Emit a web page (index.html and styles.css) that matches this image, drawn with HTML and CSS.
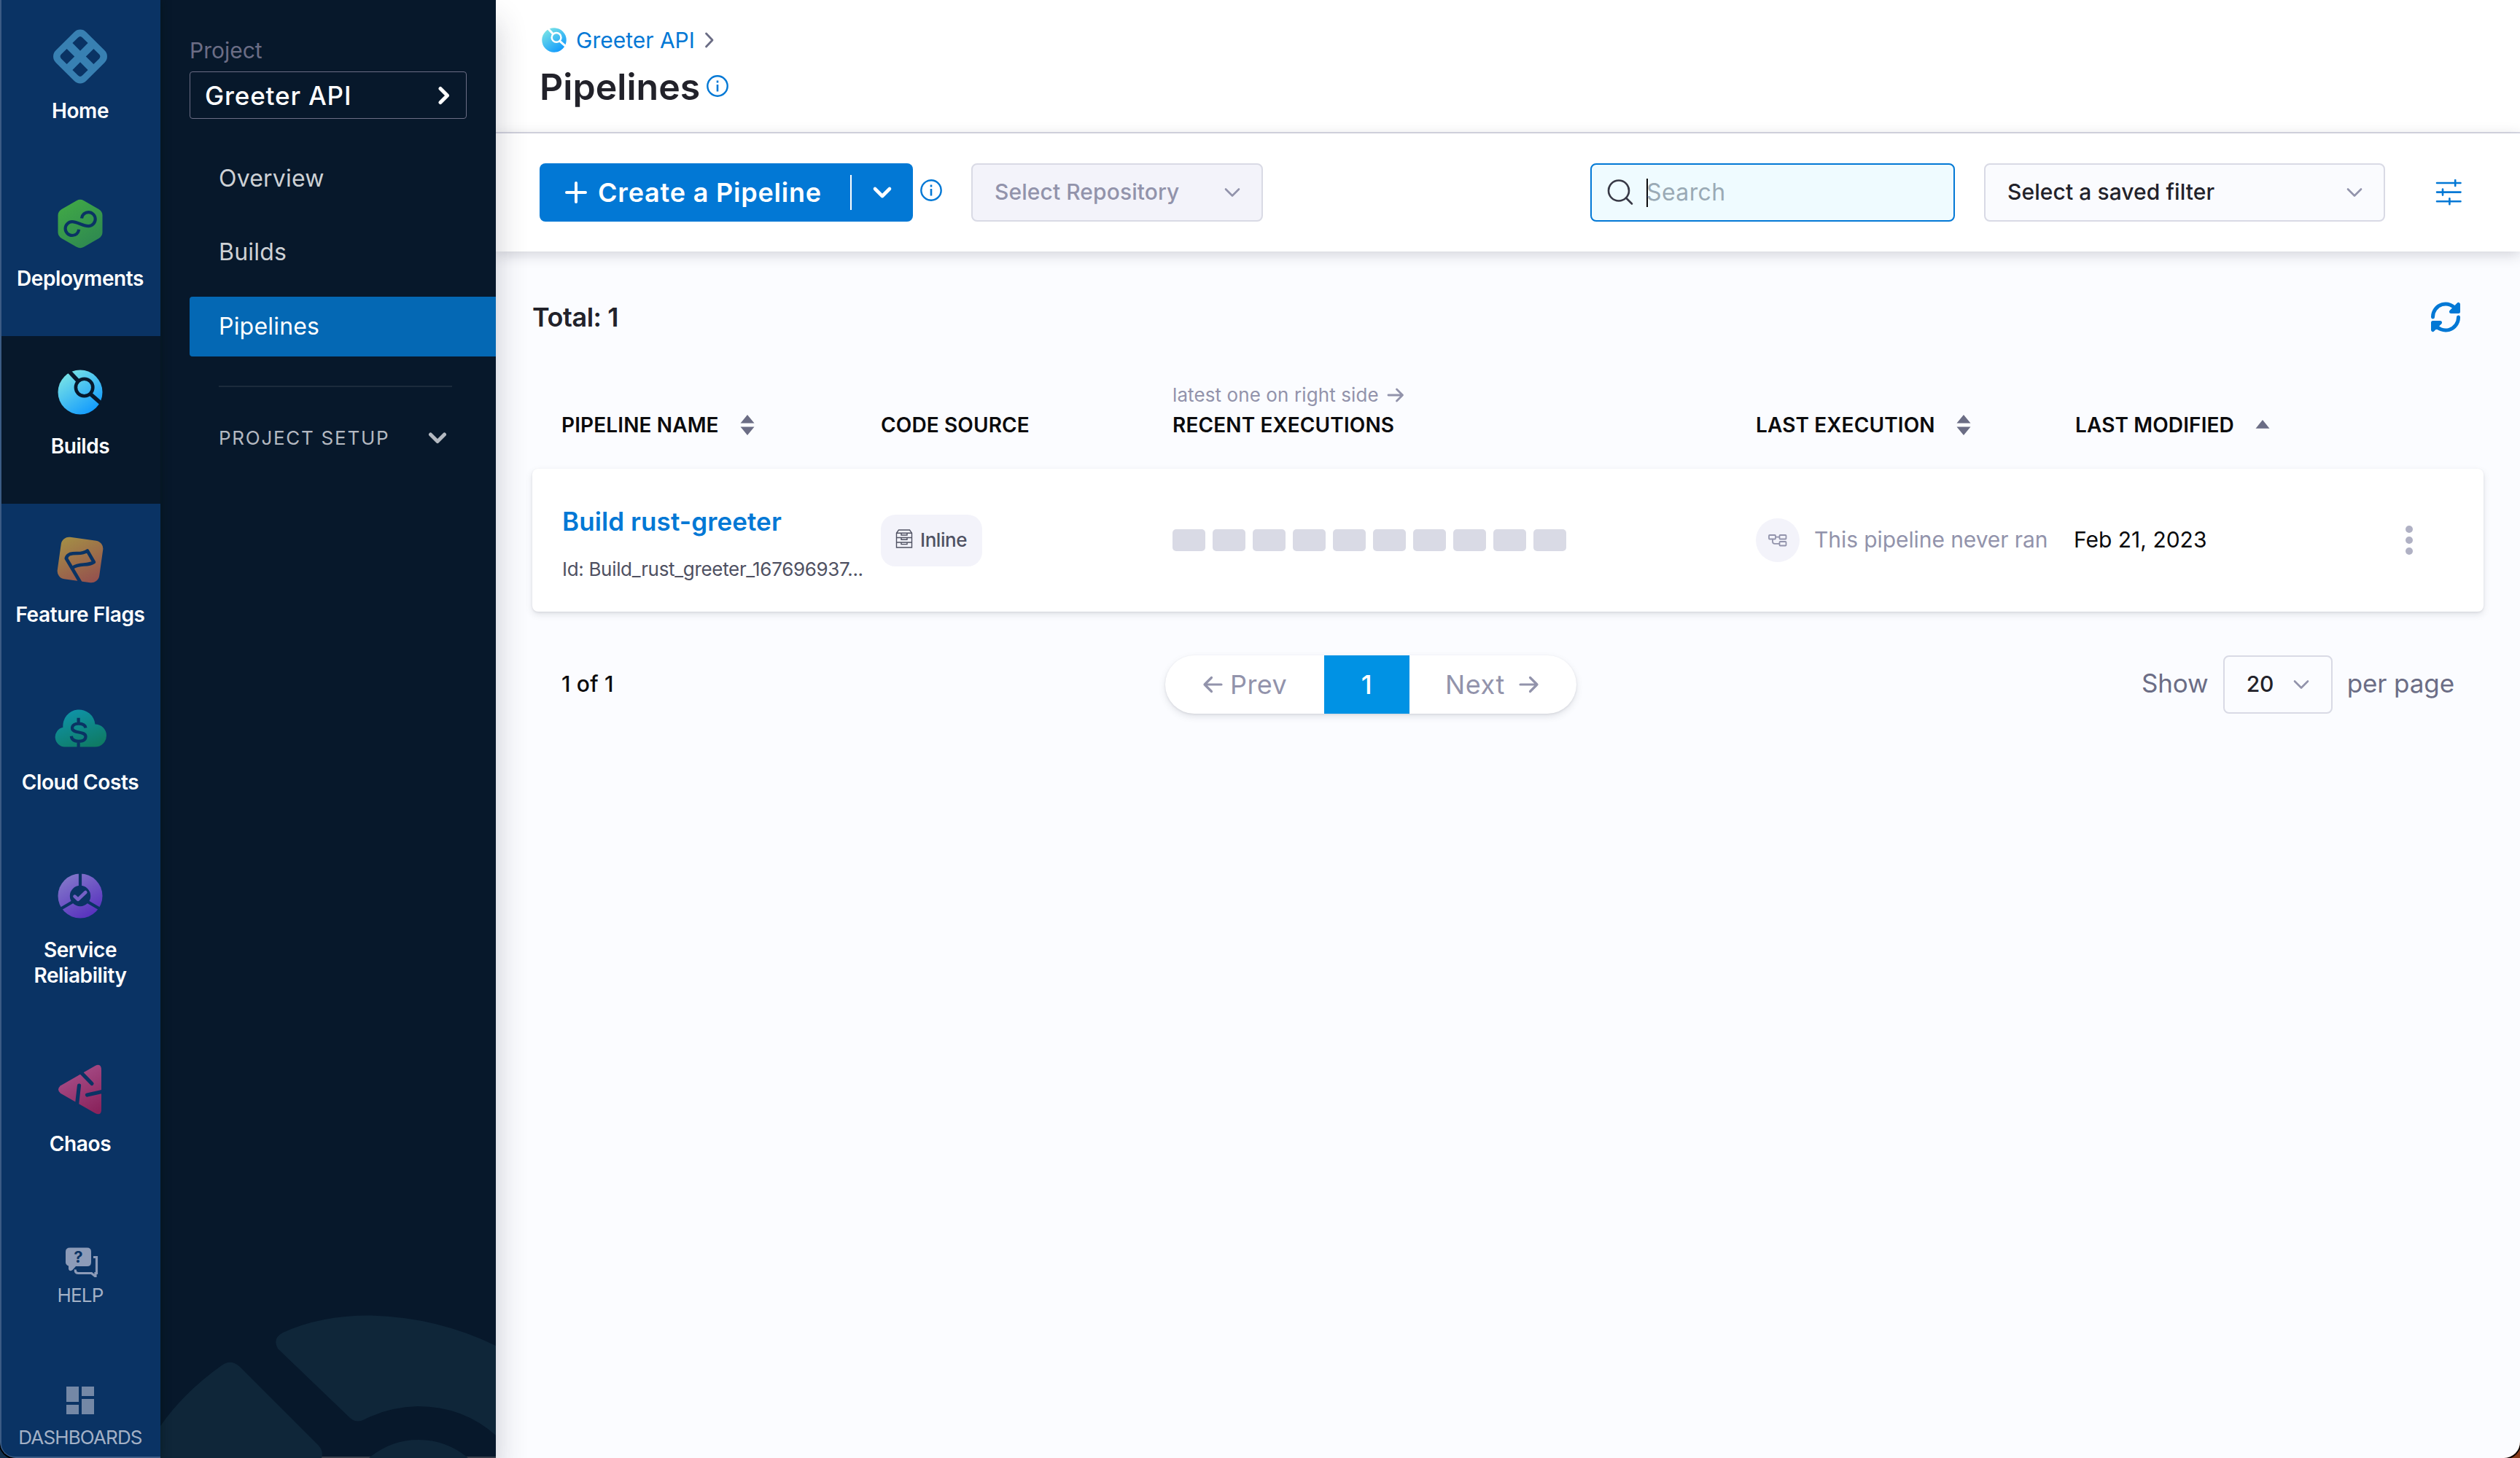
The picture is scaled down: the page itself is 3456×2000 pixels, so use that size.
FILE: index.html
```html
<!DOCTYPE html>
<html lang="en">
<head>
<meta charset="utf-8">
<title>Pipelines</title>
<link rel="stylesheet" href="styles.css">
</head>
<body>
<div class="app">
  <nav class="rail">
    <a class="module">
      <svg class="module-icon" viewBox="-40 -40 80 80"><path transform="translate(0 .5) rotate(45)" fill="#3880b2" fill-rule="evenodd" d="M-18-29.5H18A11.5 11.5 0 0 1 29.5-18V18A11.5 11.5 0 0 1 18 29.5H-18A11.5 11.5 0 0 1-29.5 18V-18A11.5 11.5 0 0 1-18-29.5ZM-5.5-20.5H-16Q-20.5-20.5-20.5-16V-5.5H-5.5ZM5.5-20.5V-5.5H20.5V-16Q20.5-20.5 16-20.5ZM-20.5 5.5V16Q-20.5 20.5-16 20.5H-5.5V5.5ZM5.5 5.5V20.5H16Q20.5 20.5 20.5 16V5.5Z"/></svg>
      <span class="module-label">Home</span>
    </a>
    <a class="module">
      <svg class="module-icon" viewBox="-40 -40 80 80"><defs><linearGradient id="g-cd" x1="0" y1="0" x2=".6" y2="1"><stop offset="0" stop-color="#42ab45"/><stop offset="1" stop-color="#2f8a50"/></linearGradient></defs><path fill="url(#g-cd)" d="M-5-31.8Q0-34.5 5-31.8L25.5-20Q30.5-17 30.5-11.5V11.5Q30.5 17 25.5 20L5 31.8Q0 34.5-5 31.8L-25.5 20Q-30.5 17-30.5 11.5V-11.5Q-30.5-17-25.5-20Z"/><path fill="none" stroke="#0a3364" stroke-width="4.2" d="M2-7.6C2.6-12.5 6.5-15.9 11.2-15.9A9.5 9.5 0 0 1 11.2 3.1C3.500 3.100-4-2.800-11-2.800A9.400 9.400 0 0 0-11 16C-6 16-2.500 12.700-1.800 7.800"/></svg>
      <span class="module-label">Deployments</span>
    </a>
    <a class="module module-active">
      <svg class="module-icon" viewBox="-40 -40 80 80"><defs><linearGradient id="g-ci" x1=".22" y1=".1" x2=".84" y2="1"><stop offset="0" stop-color="#73dfe7"/><stop offset="1" stop-color="#0a95ff"/></linearGradient></defs><circle r="30.500" fill="url(#g-ci)"/><circle cx="5.600" cy="-6.500" r="11.700" fill="none" stroke="#07182b" stroke-width="4.600"/><path fill="none" stroke="#07182b" stroke-width="5.500" d="M-17-30.500L-3-15.500M13.500 2L30 16.500"/></svg>
      <span class="module-label">Builds</span>
    </a>
    <a class="module">
      <svg class="module-icon" viewBox="-40 -40 80 80"><defs><linearGradient id="g-ff" x1=".2" y1="0" x2=".9" y2="1"><stop offset="0" stop-color="#a38b46"/><stop offset="1" stop-color="#95504e"/></linearGradient></defs><rect x="-29" y="-29" width="58" height="58" rx="11" transform="rotate(8)" fill="url(#g-ff)"/><path fill="none" stroke="#0a3364" stroke-width="4.600" stroke-linejoin="round" d="M1.500 33L-19.200-2Q-18.500-6-14-8C-6-10.500 2-6.500 9.800-12.500L18.800 3C10 9-1 4-10 10.500"/></svg>
      <span class="module-label">Feature Flags</span>
    </a>
    <a class="module">
      <svg class="module-icon" viewBox="-40 -40 80 80"><defs><linearGradient id="g-ccm" x1=".3" y1="0" x2=".8" y2="1"><stop offset="0" stop-color="#0f93a8"/><stop offset="1" stop-color="#0f7a62"/></linearGradient></defs><path fill="url(#g-ccm)" d="M-21.500 25.500A13.500 13.500 0 0 1-23.600-1.200A22 22 0 0 1 20.500-5.500A15.500 15.500 0 0 1 20.500 25.500Z"/><path fill="none" stroke="#0a3364" stroke-width="4.200" d="M7.400-.5C6.800-4.500 2.800-6.300-2.400-6.300C-7.200-6.300-11-4.200-11-.2C-11 8 7.500 3 7.500 11.500C7.500 16 3 17.800-2.400 17.800C-8 17.800-11.700 15.300-12.200 10.800M-2.400-14.200V-6.500M-2.400 18V26"/></svg>
      <span class="module-label">Cloud Costs</span>
    </a>
    <a class="module">
      <svg class="module-icon" viewBox="-40 -40 80 80"><defs><linearGradient id="g-srm" x1=".2" y1="0" x2=".8" y2="1"><stop offset="0" stop-color="#8479ca"/><stop offset="1" stop-color="#552dbd"/></linearGradient></defs><circle r="30.500" fill="url(#g-srm)"/><circle r="14.200" fill="#0a3364"/><path stroke="#0a3364" stroke-width="4.200" d="M0-10V-33M8.500 7L29 19M-8.500 7L-29 19"/><path fill="none" stroke="#7560c6" stroke-width="4.600" stroke-linecap="round" stroke-linejoin="round" d="M-7.500.6L-3 4.800L7.300-5"/></svg>
      <span class="module-label">Service<br>Reliability</span>
    </a>
    <a class="module">
      <svg class="module-icon" viewBox="-40 -40 80 80"><defs><linearGradient id="g-ch" x1=".3" y1="0" x2=".8" y2="1"><stop offset="0" stop-color="#a9518b"/><stop offset="1" stop-color="#8a235c"/></linearGradient></defs><path fill="url(#g-ch)" d="M-27-4.800L20.500-32Q29-36 29-26V28Q29 37 20.500 33L-27 5.800Q-33 .5-27-4.800Z"/><path fill="none" stroke="#0a3364" stroke-width="5.200" stroke-linecap="round" d="M0-24L16-7.500M-1.500-5L-4.600 22M9.500 8L32 3"/></svg>
      <span class="module-label">Chaos</span>
    </a>
    <a class="utility utility-help">
      <svg class="utility-icon" viewBox="0 0 48 42"><path fill="#8c9bb8" d="M6 1.500H29.500Q35 1.500 35 7V21.500Q35 27 29.500 27H14L9.500 32Q5.500 35 4 31V26.500Q0 25 0 21.500V7Q0 1.500 6 1.500Z"/><path fill="none" stroke="#8c9bb8" stroke-width="3.200" d="M38 14.500H42.500V36.500H41V41L35.500 36.500H17Q12.500 36 13.500 31.500"/><text x="17.500" y="21.500" text-anchor="middle" class="help-mark">?</text></svg>
      <span class="utility-label">HELP</span>
    </a>
    <a class="utility">
      <svg class="utility-icon" viewBox="0 0 48 42"><path fill="#7488a6" d="M5 2H22V23H5ZM26 2H43V15H26ZM5 27H22V40H5ZM26 19H43V40H26Z"/></svg>
      <span class="utility-label">DASHBOARDS</span>
    </a>
  </nav>

  <aside class="sidenav">
    <svg class="sidenav-art" viewBox="220 1800 460 200"><g fill="#0f2639"><path d="M388 1828Q440 1804 509 1804.500Q600 1807 680 1846V1969Q635 1929 573 1929Q533 1930 500 1947Q489 1953 480 1945L381 1850Q373 1836 388 1828Z"/><path d="M220 1956Q252 1910 304 1873Q316 1864 328 1874L437 1983Q444 1991 441 2000H220Z"/><path d="M506 2000Q536 1975 574 1975Q612 1975 642 2000Z"/></g></svg>
    <div class="scope-label">Project</div>
    <div class="scope-select">
      <span>Greeter API</span>
      <svg width="18" height="26" viewBox="0 0 18 26"><path fill="none" stroke="#fff" stroke-width="5" stroke-linecap="round" stroke-linejoin="round" d="M4 3.500L13.500 13L4 22.500"/></svg>
    </div>
    <ul class="menu">
      <li class="menu-item">Overview</li>
      <li class="menu-item">Builds</li>
      <li class="menu-item menu-active">Pipelines</li>
    </ul>
    <div class="menu-divider"></div>
    <div class="menu-group">
      <span>PROJECT SETUP</span>
      <svg width="26" height="18" viewBox="0 0 26 18"><path fill="none" stroke="#b4b9c1" stroke-width="5" stroke-linecap="round" stroke-linejoin="round" d="M3.500 4L13 13.500L22.500 4"/></svg>
    </div>
  </aside>

  <main class="page">
    <header class="page-header">
      <div class="crumbs">
        <svg width="34" height="34" viewBox="-31 -31 62 62"><circle r="30.500" fill="url(#g-ci)"/><circle cx="5.600" cy="-6.500" r="11.700" fill="none" stroke="#fff" stroke-width="4.600"/><path fill="none" stroke="#fff" stroke-width="5.500" d="M-17-30.500L-3-15.500M13.500 2L30 16.500"/></svg>
        <a class="crumb">Greeter API</a>
        <svg width="14" height="22" viewBox="0 0 14 22"><path fill="none" stroke="#6b6d85" stroke-width="2.800" stroke-linejoin="round" stroke-linecap="round" d="M2.500 2L11 11L2.500 20"/></svg>
      </div>
      <div class="title-row">
        <h1>Pipelines</h1>
        <svg width="30" height="30" viewBox="0 0 30 30"><circle cx="15" cy="15" r="13.700" fill="none" stroke="#0278d5" stroke-width="2.400"/><path stroke="#0278d5" stroke-width="2.600" d="M15 13V22.500M15 7.500V10.500"/></svg>
      </div>
    </header>

    <section class="toolbar">
      <div class="create">
        <button class="create-main">
          <svg width="30" height="30" viewBox="0 0 30 30"><path stroke="#fff" stroke-width="4" stroke-linecap="round" d="M15 2V28M2 15H28"/></svg>
          <span>Create a Pipeline</span>
        </button>
        <span class="create-split"></span>
        <button class="create-more"><svg width="28" height="20" viewBox="0 0 28 20"><path fill="none" stroke="#fff" stroke-width="4.600" stroke-linecap="round" stroke-linejoin="round" d="M4 5L14 15L24 5"/></svg></button>
      </div>
      <svg class="create-info" width="30" height="30" viewBox="0 0 30 30"><circle cx="15" cy="15" r="13.700" fill="none" stroke="#0278d5" stroke-width="2.400"/><path stroke="#0278d5" stroke-width="2.600" d="M15 13V22.500M15 7.500V10.500"/></svg>
      <div class="select select-repo"><span>Select Repository</span><svg width="22" height="14" viewBox="0 0 22 14"><path fill="none" stroke="#9293ab" stroke-width="2.600" stroke-linecap="round" stroke-linejoin="round" d="M2 2.500L11 11.500L20 2.500"/></svg></div>
      <div class="search">
        <svg width="36" height="36" viewBox="0 0 36 36"><circle cx="16" cy="15.500" r="14" fill="none" stroke="#383946" stroke-width="2.600"/><path stroke="#383946" stroke-width="2.600" stroke-linecap="round" d="M26 25.500L34 33.500"/></svg>
        <span class="caret"></span><span class="search-hint">Search</span>
      </div>
      <div class="select select-filter"><span>Select a saved filter</span><svg width="22" height="14" viewBox="0 0 22 14"><path fill="none" stroke="#9293ab" stroke-width="2.600" stroke-linecap="round" stroke-linejoin="round" d="M2 2.500L11 11.500L20 2.500"/></svg></div>
      <svg class="filters" width="36" height="36" viewBox="0 0 36 36"><path fill="none" stroke="#0278d5" stroke-width="2.600" stroke-linecap="round" d="M2 5H34.500M2 17.600H34.500M2 30.300H34.500M27.200 1V9M10 13.600V21.600M19.400 26.300V34.300"/></svg>
    </section>

    <section class="content">
      <div class="summary">
        <span class="total">Total: 1</span>
        <svg width="42" height="42" viewBox="-21 -21 42 42"><path id="half" fill="none" stroke="#0278d5" stroke-width="5" stroke-linecap="round" stroke-linejoin="round" d="M-17.500 0A17.500 17.500 0 0 1 15-9.500M17.500-17.500V-7.500H7.500Z"/><use href="#half" transform="rotate(180)"/></svg>
      </div>

      <div class="columns row-grid">
        <div class="column"><span>PIPELINE NAME</span><svg width="20" height="28" viewBox="0 0 20 28"><path fill="#6b6d85" d="M10 0L19.500 11.500H.5ZM.5 16.500H19.500L10 28Z"/></svg></div>
        <div class="column">CODE SOURCE</div>
        <div class="column column-runs">
          <span class="hint">latest one on right side <svg width="24" height="20" viewBox="0 0 24 20"><path fill="none" stroke="#9293ab" stroke-width="2.800" stroke-linecap="round" stroke-linejoin="round" d="M2 10H21.500M13.500 2L21.500 10L13.500 18"/></svg></span>
          <span>RECENT EXECUTIONS</span>
        </div>
        <div class="column"><span>LAST EXECUTION</span><svg width="20" height="28" viewBox="0 0 20 28"><path fill="#6b6d85" d="M10 0L19.500 11.500H.5ZM.5 16.500H19.500L10 28Z"/></svg></div>
        <div class="column"><span>LAST MODIFIED</span><svg width="20" height="28" viewBox="0 0 20 28"><path fill="#6b6d85" d="M10 7L19.500 18.800H.5Z"/></svg></div>
      </div>

      <div class="card row-grid">
        <div class="name-cell">
          <a class="name">Build rust-greeter</a>
          <span class="ident">Id: Build_rust_greeter_167696937...</span>
        </div>
        <div>
          <span class="badge"><svg width="24" height="26" viewBox="0 0 24 26"><g fill="none" stroke="#4f5162" stroke-width="1.400"><path d="M1.500 5.200L4.500 1H19.500L22.500 5.200V25H1.500ZM1.500 5.200H22.500M1.500 11.500H22.500M1.500 18H22.500"/><path d="M8 5.500V8H16V5.500M8 11.800V14.200H16V11.800M8 18.200V20.600H16V18.200"/></g></svg><span>Inline</span></span>
        </div>
        <div class="runs"><i></i><i></i><i></i><i></i><i></i><i></i><i></i><i></i><i></i><i></i></div>
        <div class="last-run">
          <span class="last-run-icon"><svg width="26" height="18" viewBox="0 0 26 18"><g fill="none" stroke="#9293ab" stroke-width="1.800"><rect x="1" y="2" width="9" height="5.500" rx="1"/><rect x="15.500" y="2" width="9" height="5.500" rx="1"/><rect x="15.500" y="11" width="9" height="5.500" rx="1"/><path d="M10 4.700H15.500M6 7.500V11Q6 13.800 9 13.800H15.500"/></g></svg></span>
          <span>This pipeline never ran</span>
        </div>
        <div class="modified">Feb 21, 2023</div>
        <div class="more"><i></i><i></i><i></i></div>
      </div>

      <footer class="pagination">
        <span class="range">1 of 1</span>
        <div class="pager">
          <span class="pager-prev"><svg width="28" height="26" viewBox="0 0 28 26"><path fill="none" stroke="#9293ab" stroke-width="3.200" stroke-linecap="round" stroke-linejoin="round" d="M26 13H3M12.500 3.500L3 13L12.500 22.500"/></svg>Prev</span>
          <span class="pager-page">1</span>
          <span class="pager-next">Next<svg width="28" height="26" viewBox="0 0 28 26"><path fill="none" stroke="#9293ab" stroke-width="3.200" stroke-linecap="round" stroke-linejoin="round" d="M2 13H25M15.500 3.500L25 13L15.500 22.500"/></svg></span>
        </div>
        <div class="page-size">
          <span class="size-text">Show</span>
          <span class="size-select"><span>20</span><svg width="22" height="14" viewBox="0 0 22 14"><path fill="none" stroke="#9293ab" stroke-width="2.600" stroke-linecap="round" stroke-linejoin="round" d="M2 2.500L11 11.500L20 2.500"/></svg></span>
          <span class="size-text">per page</span>
        </div>
      </footer>
    </section>
  </main>
</div>
</body>
</html>
```
FILE: styles.css
```css
* { box-sizing: border-box; }
html { background: linear-gradient(90deg, #12304d 50%, #87391a 50%); }
body {
  margin: 0;
  font-family: Inter, sans-serif;
  color: #22222a;
}
svg { display: block; flex: none; }
button { border: 0; padding: 0; background: none; font: inherit; color: inherit; letter-spacing: inherit; }
.app {
  display: flex;
  width: 3456px;
  height: 2000px;
  overflow: hidden;
  border-radius: 0 0 22px 22px;
  box-shadow: 0 0 0 2px #000;
}

/* module rail */
.rail {
  width: 220px;
  flex: none;
  display: flex;
  flex-direction: column;
  align-items: stretch;
  background: #0a3364;
  border-left: 2px solid #3b5b84;
  border-bottom: 2px solid #3b5b84;
  border-bottom-left-radius: 20px;
  position: relative;
  z-index: 3;
  box-shadow: 0 0 14px rgba(4, 20, 16, .5);
}
.module {
  display: flex;
  flex-direction: column;
  align-items: center;
  padding: 37px 2px 60.900px 0;
  color: #fff;
}
.module-active { background: #07182b; }
.module-icon { width: 80px; height: 80px; }
.module-label {
  margin-top: 17.500px;
  font-size: 28px;
  font-weight: 600;
  line-height: 35px;
  letter-spacing: -.4px;
  text-align: center;
}
.utility {
  display: flex;
  flex-direction: column;
  align-items: center;
  gap: 9px;
  padding: 0 2px 0 0;
}
.utility-help { margin-top: 62.500px; }
.utility:last-child { margin-top: 107px; gap: 14px; }
.utility-icon { width: 48px; height: 42px; }
.utility-help .utility-icon { margin-left: 7px; }
.utility-label { font-size: 26px; line-height: 32px; letter-spacing: -.85px; color: #a3b1c6; }
.help-mark { font: 700 22px Inter, sans-serif; fill: #0a3364; }

/* project navigation */
.sidenav {
  width: 460px;
  flex: none;
  position: relative;
  z-index: 2;
  padding: 50px 0 0 40px;
  background: #07182b;
  border-bottom: 2px solid #363f4c;
  box-shadow: 0 30px 40px rgba(40, 41, 61, .24);
}
.sidenav-art { position: absolute; left: 0; bottom: -2px; width: 460px; height: 200px; }
.scope-label { font-size: 30px; line-height: 38px; color: #6b6d85; }
.scope-select {
  display: flex;
  align-items: center;
  justify-content: space-between;
  width: 380px;
  height: 65px;
  margin-top: 10px;
  padding: 0 21px 0 20px;
  border: 1px solid #6b6d85;
  border-radius: 4px;
  font-size: 35px;
  font-weight: 500;
  letter-spacing: .85px;
  color: #fff;
}
.menu { list-style: none; margin: 41px 0 0; padding: 0; display: flex; flex-direction: column; gap: 19.300px; }
.menu-item {
  height: 82px;
  line-height: 82px;
  padding-left: 40px;
  border-radius: 4px 0 0 4px;
  font-size: 32px;
  letter-spacing: .2px;
  color: #cdd1d5;
}
.menu-active { background: #0468b4; color: #fff; }
.menu-divider { width: 320px; height: 2px; margin: 40px 0 0 40px; background: #1c2b3c; }
.menu-group {
  display: flex;
  align-items: center;
  justify-content: space-between;
  width: 313px;
  margin: 54px 0 0 40px;
  font-size: 26px;
  line-height: 32px;
  letter-spacing: 1.730px;
  color: #b4b9c1;
}

/* page frame */
.page { flex: 1; display: flex; flex-direction: column; background: #fbfcff; }
.page-header { height: 183px; padding: 36px 0 0 60px; background: #fff; border-bottom: 2px solid #d9dae5; }
.crumbs { display: flex; align-items: center; height: 38px; padding-left: 3px; }
.crumb { margin-left: 13px; margin-right: 13px; font-size: 30px; color: #0278d5; }
.title-row { display: flex; align-items: center; gap: 9px; margin-top: 14px; height: 62px; }
.title-row svg { margin-top: -2px; }
h1 { margin: 0; font-size: 50px; font-weight: 600; letter-spacing: .05px; line-height: 62px; }

/* toolbar */
.toolbar {
  display: flex;
  align-items: center;
  height: 162px;
  padding: 0 80px 0 60px;
  background: #fff;
  position: relative;
  z-index: 1;
  box-shadow: 0 4px 18px rgba(40, 41, 61, .2);
}
.create { display: flex; align-items: center; width: 512px; height: 80px; border-radius: 8px; background: #0278d5; color: #fff; }
.create-main {
  display: flex;
  align-items: center;
  gap: 15px;
  width: 426px;
  padding-left: 35px;
  font-size: 36px;
  font-weight: 600;
  letter-spacing: .8px;
}
.create-main span { margin-top: -1px; }
.create-split { width: 2px; height: 48px; background: #fff; }
.create-more { flex: 1; display: flex; justify-content: center; }
.create-info { margin: -6px 40px 0 10px; }
.select {
  display: flex;
  align-items: center;
  justify-content: space-between;
  height: 80px;
  padding: 0 29px 0 30px;
  border: 2px solid #d9dae5;
  border-radius: 8px;
  font-size: 30px;
  font-weight: 500;
  letter-spacing: .08px;
}
.select span { margin-top: -2px; }
.select-repo { width: 400px; background: #f3f3fa; color: #9293ab; }
.search {
  display: flex;
  align-items: center;
  width: 500px;
  height: 80px;
  margin-left: auto;
  padding-left: 21px;
  border: 2px solid #0278d5;
  border-radius: 8px;
  background: #effbff;
}
.caret { width: 2px; height: 39px; margin-left: 18px; background: #0b0b0d; }
.search-hint { margin: -2px 0 0 -2px; font-size: 32px; letter-spacing: .4px; color: #9aaab5; }
.select-filter { width: 550px; margin: 0 69px 0 40px; background: #fafbfe; }

/* pipeline list */
.content { padding: 0 50px; }
.summary { display: flex; align-items: center; justify-content: space-between; height: 42px; margin-top: 69px; padding-right: 31px; }
.total { font-size: 36px; font-weight: 600; letter-spacing: -.45px; }
.row-grid { display: grid; grid-template-columns: 438px 400px 800px 438px 400px 1fr; padding-left: 40px; }
.columns { align-items: end; height: 187px; padding-bottom: 42px; font-size: 28px; font-weight: 600; line-height: 36px; letter-spacing: .12px; color: #0b0b0d; }
.column { display: flex; align-items: center; gap: 29px; height: 36px; }
.column-runs { flex-direction: column; align-items: flex-start; justify-content: flex-end; gap: 5px; height: auto; }
.hint { display: flex; align-items: center; gap: 11px; font-size: 26px; font-weight: 400; letter-spacing: .1px; color: #9293ab; }
.card {
  height: 196px;
  align-items: center;
  border-radius: 8px;
  background: #fff;
  box-shadow: 0 1px 3px rgba(40, 41, 61, .1), 0 4px 10px rgba(96, 97, 112, .16);
}
.name-cell { display: flex; flex-direction: column; gap: 28px; margin-top: 7px; padding-left: 1px; }
.name { font-size: 35px; font-weight: 600; line-height: 44px; letter-spacing: .1px; color: #0278d5; white-space: nowrap; }
.ident { font-size: 26px; line-height: 32px; letter-spacing: -.32px; color: #4f5162; white-space: nowrap; }
.badge {
  display: flex;
  align-items: center;
  gap: 10px;
  width: 139px;
  height: 71px;
  padding-left: 20px;
  border-radius: 20px;
  background: #f3f3fa;
  font-size: 26px;
  font-weight: 500;
  letter-spacing: -.45px;
  color: #4f5162;
}
.badge svg { margin-top: -5px; }
.badge span { margin-top: -2px; }
.runs { display: flex; gap: 10px; }
.runs i { width: 45px; height: 30px; border-radius: 5px; background: #d9dae5; }
.last-run { display: flex; align-items: center; gap: 20px; font-size: 30px; letter-spacing: -.08px; color: #9293ab; white-space: nowrap; }
.last-run-icon { display: flex; align-items: center; justify-content: center; width: 60px; height: 60px; border-radius: 50%; background: #f3f3fa; }
.last-run > span:last-child, .modified { margin-top: -2px; }
.modified { margin-left: -2px; font-size: 30px; color: #0b0b0d; }
.more { display: flex; flex-direction: column; gap: 5px; margin-left: 53px; }
.more i { width: 10px; height: 10px; border-radius: 50%; background: #b0b1c4; }

/* pagination */
.pagination { display: grid; grid-template-columns: 868px 564px 1fr; align-items: center; height: 80px; margin-top: 60px; }
.range { margin-top: -2px; padding-left: 40px; font-size: 30px; font-weight: 500; letter-spacing: .2px; color: #0b0b0d; }
.pager {
  display: flex;
  height: 80px;
  border-radius: 40px;
  background: #fff;
  box-shadow: 0 1px 3px rgba(40, 41, 61, .1), 0 4px 10px rgba(96, 97, 112, .16);
  font-size: 36px;
  line-height: 80px;
  letter-spacing: .4px;
  color: #9293ab;
}
.pager-prev { display: flex; align-items: center; gap: 10px; width: 218px; padding-left: 51px; }
.pager-page { width: 117px; text-align: center; background: #0092e4; color: #fff; font-weight: 500; }
.pager-next { display: flex; align-items: center; gap: 19px; padding-left: 49px; letter-spacing: .6px; }
.page-size { display: flex; align-items: center; justify-content: flex-end; gap: 20px; padding-right: 40px; font-size: 35px; letter-spacing: -.1px; color: #6b6d85; }
.size-text { margin-top: -4px; }
.size-select {
  display: flex;
  align-items: center;
  justify-content: space-between;
  width: 150px;
  height: 80px;
  padding: 0 30px;
  border: 2px solid #d9dae5;
  border-radius: 8px;
  font-size: 30px;
  font-weight: 500;
  color: #22222a;
}
.size-select span { margin-top: -2px; }
```
